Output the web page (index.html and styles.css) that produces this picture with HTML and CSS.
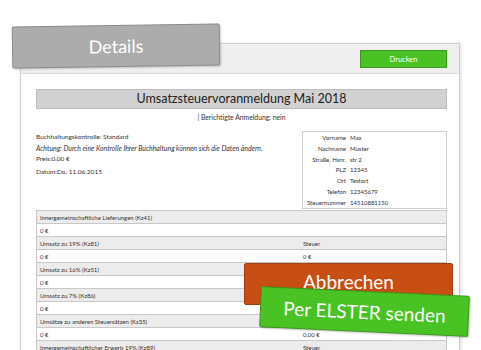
FILE: index.html
```html
<!DOCTYPE html>
<html lang="de">

<head>
    <meta charset="UTF-8">
    <meta name="viewport" content="width=device-width, initial-scale=1.0">
    <title>Umsatzsteuervoranmeldung</title>
    <link rel="stylesheet" href="styles.css">
</head>

<body>
    <div class="stage">
        <div class="panel">
            <div class="panel-head">
                <button class="btn-print">Drucken</button>
            </div>
            <div class="panel-body">
                <h1 class="title">Umsatzsteuervoranmeldung Mai 2018</h1>
                <p class="subline">| Berichtigte Anmeldung: nein</p>

                <div class="info">
                    <div class="info-left">
                        <p>Buchhaltungskontrolle: Standard<br>
                            <em>Achtung: Durch eine Kontrolle Ihrer Buchhaltung können sich die Daten ändern.</em></p>
                        <p>Preis:0,00 €</p>
                        <p class="date">Datum:Do, 11.06.2015</p>
                    </div>
                    <table class="address">
                        <tr><th>Vorname</th><td>Max</td></tr>
                        <tr><th>Nachname</th><td>Muster</td></tr>
                        <tr><th>Straße, Hsnr.</th><td>str 2</td></tr>
                        <tr><th>PLZ</th><td>12345</td></tr>
                        <tr><th>Ort</th><td>Testort</td></tr>
                        <tr><th>Telefon</th><td>12345679</td></tr>
                        <tr><th>Steuernummer</th><td>14510881150</td></tr>
                    </table>
                </div>

                <table class="values">
                    <tr class="label"><td>Innergemeinschaftliche Lieferungen (Kz41)</td><td></td></tr>
                    <tr><td>0 €</td><td></td></tr>
                    <tr class="label"><td>Umsatz zu 19% (Kz81)</td><td>Steuer</td></tr>
                    <tr><td>0 €</td><td>0 €</td></tr>
                    <tr class="label"><td>Umsatz zu 16% (Kz51)</td><td>Steuer</td></tr>
                    <tr><td>0 €</td><td>0 €</td></tr>
                    <tr class="label"><td>Umsatz zu 7% (Kz86)</td><td>Steuer</td></tr>
                    <tr><td>0 €</td><td>0 €</td></tr>
                    <tr class="label"><td>Umsätze zu anderen Steuersätzen (Kz35)</td><td>Steuer</td></tr>
                    <tr><td>0 €</td><td>0,00 €</td></tr>
                    <tr class="label"><td>Innergemeinschaftlicher Erwerb 19% (Kz89)</td><td>Steuer</td></tr>
                </table>
            </div>
        </div>

        <!-- Overlay-Elemente -->
        <div class="tag-details">Details</div>
        <div class="btn-cancel">Abbrechen</div>
        <div class="btn-send">Per ELSTER senden</div>
    </div>
</body>

</html>
```

FILE: styles.css
```css
body {
    margin: 0;
    padding: 0;
    background-color: #ffffff;
    font-family: Lato, "Open Sans", sans-serif;
    color: #333333;
}

.stage {
    position: relative;
    width: 481px;
    height: 350px;
    overflow: hidden;
}

.panel {
    margin: 43px 0 0 20px;
    width: 438px;
    height: 340px;
    background-color: #ffffff;
    border: 1px solid #cfcfcf;
    box-shadow: 1px 1px 3px rgba(0, 0, 0, 0.15);
}

.panel-head {
    height: 29px;
    background-color: #efefef;
    border-bottom: 1px solid #dcdcdc;
    display: flex;
    justify-content: flex-end;
    align-items: center;
    padding-right: 12px;
}

.btn-print {
    width: 87px;
    height: 18px;
    margin-top: 1px;
    padding: 0;
    background-color: #49c223;
    border: 1px solid #3a9a1d;
    color: #ffffff;
    font-family: Lato, sans-serif;
    font-size: 7.5px;
}

.panel-body {
    padding: 15px 12px 0 15px;
}

.title {
    margin: 0;
    height: 18px;
    line-height: 18px;
    background-color: #d1d1d1;
    border: 1px solid #bdbdbd;
    text-align: center;
    font-size: 12.5px;
    font-weight: normal;
    color: #222222;
}

.subline {
    margin: 3px 0 0;
    text-align: center;
    font-size: 6.8px;
    line-height: 10px;
}

.info {
    display: flex;
    justify-content: space-between;
    margin-top: 9px;
}

.info-left {
    padding-top: 1px;
    font-size: 6.5px;
}

.info-left em {
    font-size: 6.9px;
}

.info-left p {
    margin: 0;
    line-height: 10.5px;
}

.info-left .date {
    margin-top: 2.5px;
}

.address {
    width: 145px;
    height: 78px;
    border: 1px solid #cfcfcf;
    border-collapse: collapse;
    font-size: 6px;
}

.address th {
    width: 43px;
    padding: 0 4px 0 0;
    text-align: right;
    font-weight: normal;
}

.address td {
    padding: 0;
}

.values {
    width: 100%;
    margin-top: 1px;
    border-collapse: collapse;
    border: 1px solid #c8c8c8;
    font-size: 6px;
}

.values td {
    height: 12px;
    padding: 0 0 0 3px;
    border-top: 1px solid #c8c8c8;
    border-bottom: 1px solid #c8c8c8;
}

.values td:first-child {
    width: 260px;
}

.values .label td {
    background-color: #ececec;
}

.tag-details {
    position: absolute;
    left: 12px;
    top: 25px;
    width: 206px;
    height: 40px;
    line-height: 40px;
    background-color: #acacac;
    border: 1px solid #8c8c8c;
    border-radius: 2px;
    box-shadow: 1px 1px 2px rgba(0, 0, 0, 0.2);
    transform: rotate(-0.8deg);
    text-align: center;
    color: #ffffff;
    font-size: 18px;
}

.btn-cancel {
    position: absolute;
    left: 244px;
    top: 263px;
    width: 207px;
    height: 40px;
    line-height: 36px;
    background-color: #c74f13;
    border: 1px solid #a3400d;
    border-radius: 2px;
    text-align: center;
    color: #ffffff;
    font-size: 19px;
}

.btn-send {
    position: absolute;
    left: 260px;
    top: 291px;
    width: 207px;
    height: 39px;
    line-height: 39px;
    background-color: #48c323;
    border: 1px solid #3a9a1c;
    border-radius: 2px;
    box-shadow: 1px 1px 2px rgba(0, 0, 0, 0.25);
    transform: rotate(2.7deg);
    text-align: center;
    color: #ffffff;
    font-size: 19px;
}
```
